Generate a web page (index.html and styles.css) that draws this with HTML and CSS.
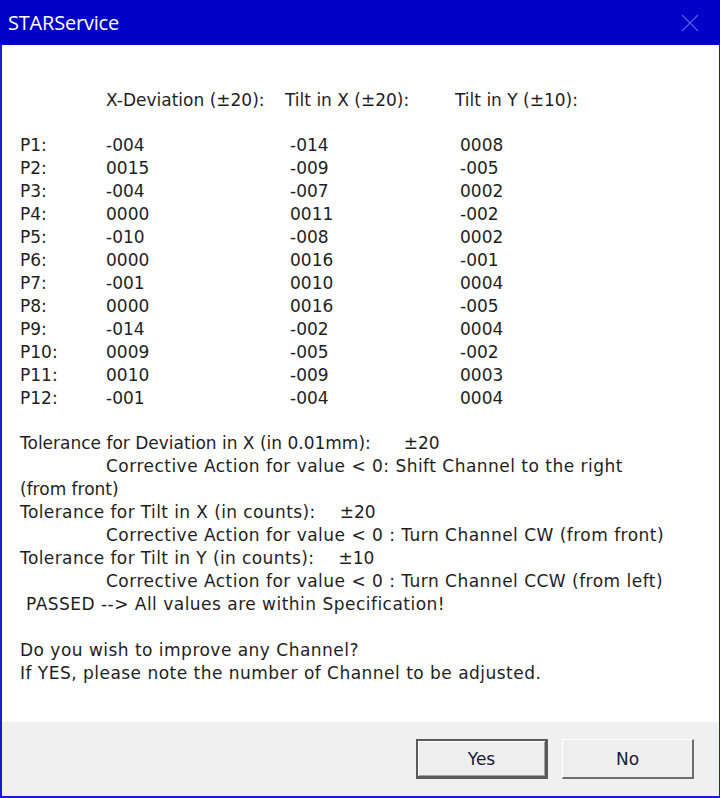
FILE: index.html
```html
<!DOCTYPE html>
<html>
<head>
<meta charset="utf-8">
<link rel="stylesheet" href="styles.css">
</head>
<body>
<div class="window">
  <div class="titlebar">
    <span class="title">STARService</span>
    <svg class="close" width="18" height="18" viewBox="0 0 18 18"><path d="M1 1L17 17M17 1L1 17" stroke="#5a5ae0" stroke-width="1.2" fill="none"/></svg>
  </div>
  <div class="content">
    <div class="row header"><span class="c1"></span><span class="c2">X-Deviation (±20):</span><span class="c3">Tilt in X (±20):</span><span class="c4">Tilt in Y (±10):</span></div>
    <div class="table">
      <div class="row"><span class="c1">P1:</span><span class="c2">-004</span><span class="c3 v">-014</span><span class="c4 v">0008</span></div>
      <div class="row"><span class="c1">P2:</span><span class="c2">0015</span><span class="c3 v">-009</span><span class="c4 v">-005</span></div>
      <div class="row"><span class="c1">P3:</span><span class="c2">-004</span><span class="c3 v">-007</span><span class="c4 v">0002</span></div>
      <div class="row"><span class="c1">P4:</span><span class="c2">0000</span><span class="c3 v">0011</span><span class="c4 v">-002</span></div>
      <div class="row"><span class="c1">P5:</span><span class="c2">-010</span><span class="c3 v">-008</span><span class="c4 v">0002</span></div>
      <div class="row"><span class="c1">P6:</span><span class="c2">0000</span><span class="c3 v">0016</span><span class="c4 v">-001</span></div>
      <div class="row"><span class="c1">P7:</span><span class="c2">-001</span><span class="c3 v">0010</span><span class="c4 v">0004</span></div>
      <div class="row"><span class="c1">P8:</span><span class="c2">0000</span><span class="c3 v">0016</span><span class="c4 v">-005</span></div>
      <div class="row"><span class="c1">P9:</span><span class="c2">-014</span><span class="c3 v">-002</span><span class="c4 v">0004</span></div>
      <div class="row"><span class="c1">P10:</span><span class="c2">0009</span><span class="c3 v">-005</span><span class="c4 v">-002</span></div>
      <div class="row"><span class="c1">P11:</span><span class="c2">0010</span><span class="c3 v">-009</span><span class="c4 v">0003</span></div>
      <div class="row"><span class="c1">P12:</span><span class="c2">-001</span><span class="c3 v">-004</span><span class="c4 v">0004</span></div>
    </div>
    <div class="notes">
      <div class="line">Tolerance for Deviation in X (in 0.01mm):<span class="tol1">±20</span></div>
      <div class="line ind wide">Corrective Action for value &lt; 0: Shift Channel to the right</div>
      <div class="line">(from front)</div>
      <div class="line"><span class="mid">Tolerance for Tilt in X (in counts):</span><span class="tol2">±20</span></div>
      <div class="line ind wide">Corrective Action for value &lt; 0 : Turn Channel CW (from front)</div>
      <div class="line"><span class="mid">Tolerance for Tilt in Y (in counts):</span><span class="tol2">±10</span></div>
      <div class="line ind wide">Corrective Action for value &lt; 0 : Turn Channel CCW (from left)</div>
      <div class="line passed wide">PASSED --&gt; All values are within Specification!</div>
      <div class="line blank"></div>
      <div class="line wide">Do you wish to improve any Channel?</div>
      <div class="line wide">If YES, please note the number of Channel to be adjusted.</div>
    </div>
  </div>
  <div class="footer">
    <button class="btn default">Yes</button>
    <button class="btn">No</button>
  </div>
</div>
</body>
</html>
```
FILE: styles.css
```css
html, body {
  margin: 0;
  padding: 0;
  background: #ffffff;
}
*, *::before, *::after {
  box-sizing: border-box;
}
.window {
  width: 720px;
  height: 798px;
  border: 1px solid #1a1ad0;
  border-left-width: 2px;
  border-bottom-width: 2px;
  border-top: none;
  display: flex;
  flex-direction: column;
  font-family: "DejaVu Sans", sans-serif;
  color: #1e1e1e;
  font-size: 17px;
}
.titlebar {
  height: 45px;
  flex: none;
  background: #0000c8;
  margin: 0 -1px 0 -2px;
  display: flex;
  align-items: center;
  justify-content: space-between;
  padding: 0 21px 0 8px;
}
.title {
  color: #ffffff;
  font-family: "Open Sans", "Noto Sans", sans-serif;
  font-size: 20px;
  letter-spacing: -0.2px;
}
.close {
  display: block;
}
.content {
  flex: 1;
  padding: 44px 0 0 18px;
}
.row {
  display: flex;
  height: 23px;
  line-height: 23px;
  white-space: nowrap;
}
.header {
  margin-bottom: 22px;
}
.c1 { width: 86px; flex: none; }
.c2 { width: 179px; flex: none; }
.c3 { width: 170px; flex: none; }
.c4 { width: 150px; flex: none; }
.v { padding-left: 5px; }
.table {
  margin-bottom: 22px;
}
.line {
  height: 23px;
  line-height: 23px;
  white-space: nowrap;
}
.wide { letter-spacing: 0.48px; }
.mid { letter-spacing: 0.4px; }
.ind { padding-left: 86px; }
.passed { padding-left: 6px; }
.tol1 { margin-left: 33px; }
.tol2 { margin-left: 24px; }
.footer {
  height: 74px;
  flex: none;
  background: #f0f0f0;
  display: flex;
  justify-content: flex-end;
  align-items: flex-start;
  gap: 14px;
  padding: 17px 25px 0 0;
}
.btn {
  width: 132px;
  height: 40px;
  background: #eeeeee;
  font-family: "DejaVu Sans", sans-serif;
  font-size: 17px;
  color: #1a1a3a;
  border-style: solid;
  border-width: 1px 2px 2px 1px;
  border-color: #ffffff #6e6e6e #6e6e6e #ffffff;
  padding: 0;
}
.btn.default {
  border: 2px solid #5a5a5a;
  border-right-width: 3px;
  border-bottom-width: 3px;
  box-shadow: inset 1px 1px 0 #ffffff, inset -1px -1px 0 #a0a0a0;
}
```
